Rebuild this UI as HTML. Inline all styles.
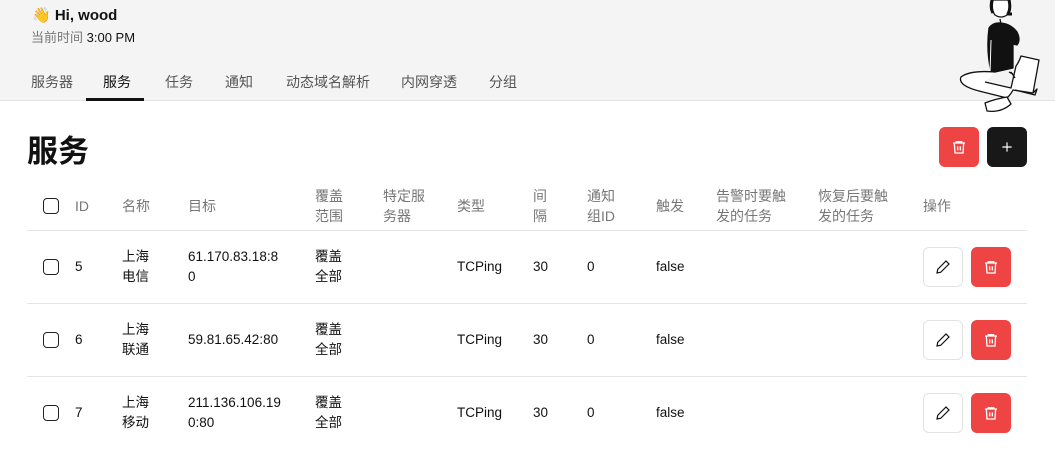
<!DOCTYPE html>
<html><head><meta charset="utf-8"><style>
*{margin:0;padding:0;box-sizing:border-box}
body{width:1055px;height:460px;overflow:hidden;background:#fff;font-family:"Liberation Sans","Noto Sans CJK SC",sans-serif;color:#111;position:relative}
.hdr{position:absolute;left:0;top:0;width:1055px;height:101px;background:#f4f4f4;border-bottom:1px solid #e3e3e3}
.a{position:absolute;white-space:nowrap}
.tab{position:absolute;top:72px;font-size:14px;color:#555}
.th{position:absolute;font-size:14px;color:#777;line-height:20px}
.td{position:absolute;font-size:13.5px;color:#111;line-height:20px}
.line{position:absolute;left:27px;width:1000px;height:1px;background:#e5e5e5}
.cb{position:absolute;left:43px;width:16px;height:16px;border:1.5px solid #222;border-radius:4px}
.btn{position:absolute;width:40px;height:40px;border-radius:6px;display:flex;align-items:center;justify-content:center}
.red{background:#ef4444}
.ed{border:1px solid #e3e3e3;background:#fff}
</style></head><body>
<div class="hdr"></div>
<div class="a" style="left:32px;top:6px;font-size:15px;font-weight:bold">👋 Hi, wood</div>
<div class="a" style="left:31px;top:27px;font-size:13px;color:#777">当前时间 <span style="color:#111">3:00 PM</span></div>
<div class="tab" style="left:31px">服务器</div>
<div class="tab" style="left:103px;color:#111">服务</div>
<div class="a" style="left:86px;top:98px;width:58px;height:3px;background:#111"></div>
<div class="tab" style="left:165px">任务</div>
<div class="tab" style="left:225px">通知</div>
<div class="tab" style="left:286px">动态域名解析</div>
<div class="tab" style="left:401px">内网穿透</div>
<div class="tab" style="left:489px">分组</div>
<svg class="a" style="left:955px;top:0" width="100" height="115" viewBox="0 0 100 115" fill="none" stroke="#111" stroke-width="1.3" stroke-linejoin="round">
<path d="M38 0 Q36 10 40 15 Q46 19 52 15 Q55 8 55 0Z" fill="#fff"/>
<path d="M37 0 Q35 8 38 13 M54 0 Q56 8 53 14 L57 14" stroke-width="3"/>
<path d="M45 19 L46 24"/>
<path d="M34 28 Q38 22 46 23 Q56 24 62 32 Q66 40 62 45 L58 44 L58 68 L40 72 L36 72 Q31 50 34 28Z" fill="#111"/>
<path d="M36 40 L35 74" stroke="#fff" stroke-width="1"/>
<path d="M40 72 Q15 70 6 77 Q2 86 28 92 L52 98 Q56 94 58 90 L78 93 L84 60 L66 56 Q64 62 61 66 L56 88 L30 82" fill="#fff"/>
<path d="M56 72 L60 78 M58 74 L54 72" />
<path d="M30 103 Q40 99 52 97 L56 104 Q46 113 32 111Z" fill="#fff"/>
<path d="M60 90 L80 95 L82 89 L78 93"/>
</svg>
<div class="a" style="left:27px;top:126px;font-size:31px;font-weight:bold">服务</div>
<div class="btn red" style="left:939px;top:127px"><svg width="16" height="16" viewBox="0 0 24 24" fill="none" stroke="#fff" stroke-width="2"><path d="M3 6h18M8 6V4h8v2M5 6l1 15h12l1-15M10 11v6M14 11v6"/></svg></div>
<div class="btn" style="left:987px;top:127px;background:#181818"><svg width="14" height="14" viewBox="0 0 24 24" stroke="#fff" stroke-width="2"><path d="M12 4v16M4 12h16"/></svg></div>
<div class="cb" style="top:198px"></div>
<div class="th" style="left:75px;top:196px">ID</div>
<div class="th" style="left:122px;top:196px">名称</div>
<div class="th" style="left:188px;top:196px">目标</div>
<div class="th" style="left:315px;top:186px">覆盖<br>范围</div>
<div class="th" style="left:383px;top:186px">特定服<br>务器</div>
<div class="th" style="left:457px;top:196px">类型</div>
<div class="th" style="left:533px;top:186px">间<br>隔</div>
<div class="th" style="left:587px;top:186px">通知<br>组ID</div>
<div class="th" style="left:656px;top:196px">触发</div>
<div class="th" style="left:716px;top:186px">告警时要触<br>发的任务</div>
<div class="th" style="left:818px;top:186px">恢复后要触<br>发的任务</div>
<div class="th" style="left:923px;top:196px">操作</div>
<div class="line" style="top:230px"></div>
<div class="line" style="top:303px"></div>
<div class="line" style="top:376px"></div>

<div class="cb" style="top:259px"></div>
<div class="td" style="left:75px;top:257px">5</div>
<div class="td" style="left:122px;top:247px">上海<br>电信</div>
<div class="td" style="left:188px;top:247px">61.170.83.18:8<br>0</div>
<div class="td" style="left:315px;top:247px">覆盖<br>全部</div>
<div class="td" style="left:457px;top:257px">TCPing</div>
<div class="td" style="left:533px;top:257px">30</div>
<div class="td" style="left:587px;top:257px">0</div>
<div class="td" style="left:656px;top:257px">false</div>

<div class="cb" style="top:332px"></div>
<div class="td" style="left:75px;top:330px">6</div>
<div class="td" style="left:122px;top:320px">上海<br>联通</div>
<div class="td" style="left:188px;top:330px">59.81.65.42:80</div>
<div class="td" style="left:315px;top:320px">覆盖<br>全部</div>
<div class="td" style="left:457px;top:330px">TCPing</div>
<div class="td" style="left:533px;top:330px">30</div>
<div class="td" style="left:587px;top:330px">0</div>
<div class="td" style="left:656px;top:330px">false</div>

<div class="cb" style="top:405px"></div>
<div class="td" style="left:75px;top:403px">7</div>
<div class="td" style="left:122px;top:393px">上海<br>移动</div>
<div class="td" style="left:188px;top:393px">211.136.106.19<br>0:80</div>
<div class="td" style="left:315px;top:393px">覆盖<br>全部</div>
<div class="td" style="left:457px;top:403px">TCPing</div>
<div class="td" style="left:533px;top:403px">30</div>
<div class="td" style="left:587px;top:403px">0</div>
<div class="td" style="left:656px;top:403px">false</div>

<div class="btn ed" style="left:923px;top:247px"><svg width="18" height="18" viewBox="0 0 24 24" fill="none" stroke="#111" stroke-width="1.6"><path d="M4 20l1-5L16 4l4 4L9 19z"/></svg></div>
<div class="btn red" style="left:971px;top:247px"><svg width="16" height="16" viewBox="0 0 24 24" fill="none" stroke="#fff" stroke-width="2"><path d="M3 6h18M8 6V4h8v2M5 6l1 15h12l1-15M10 11v6M14 11v6"/></svg></div>
<div class="btn ed" style="left:923px;top:320px"><svg width="18" height="18" viewBox="0 0 24 24" fill="none" stroke="#111" stroke-width="1.6"><path d="M4 20l1-5L16 4l4 4L9 19z"/></svg></div>
<div class="btn red" style="left:971px;top:320px"><svg width="16" height="16" viewBox="0 0 24 24" fill="none" stroke="#fff" stroke-width="2"><path d="M3 6h18M8 6V4h8v2M5 6l1 15h12l1-15M10 11v6M14 11v6"/></svg></div>
<div class="btn ed" style="left:923px;top:393px"><svg width="18" height="18" viewBox="0 0 24 24" fill="none" stroke="#111" stroke-width="1.6"><path d="M4 20l1-5L16 4l4 4L9 19z"/></svg></div>
<div class="btn red" style="left:971px;top:393px"><svg width="16" height="16" viewBox="0 0 24 24" fill="none" stroke="#fff" stroke-width="2"><path d="M3 6h18M8 6V4h8v2M5 6l1 15h12l1-15M10 11v6M14 11v6"/></svg></div>
</body></html>
